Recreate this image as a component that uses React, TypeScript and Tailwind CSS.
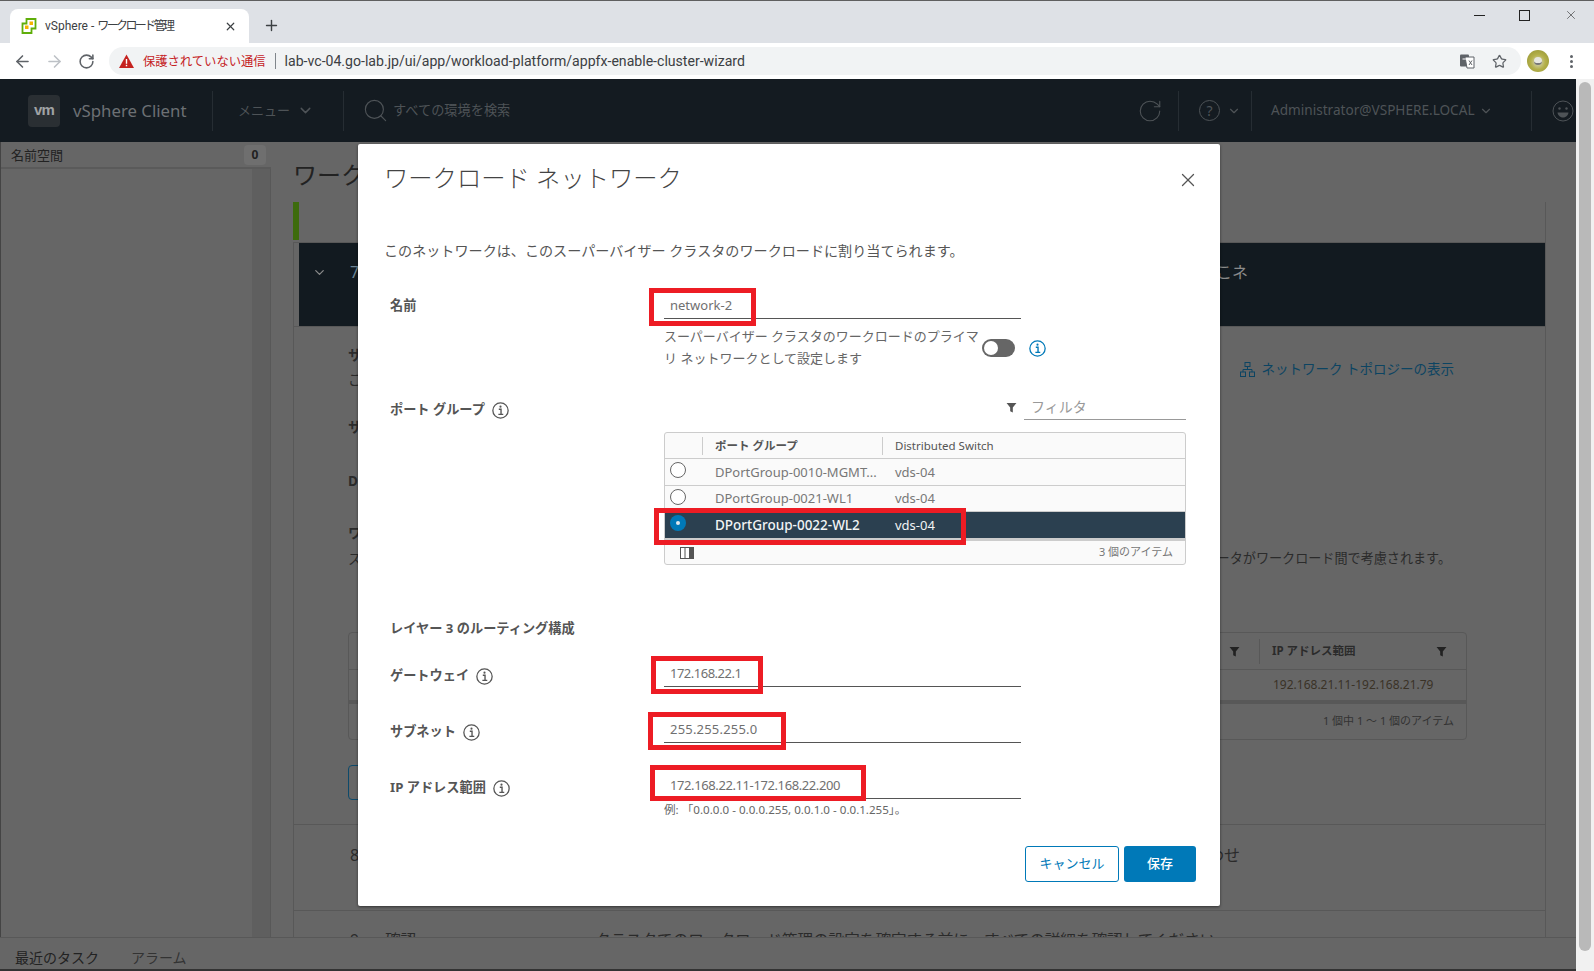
import { ArrowLeft, ArrowRight, ChevronDown, RotateCw, Search, Star, X, Plus } from "lucide-react";

const sans = "font-['Noto_Sans','Noto_Sans_CJK_JP',sans-serif]";

// small round "i" icon used next to the form labels
const InfoIcon = ({ className = "text-[#555]" }: { className?: string }) => (
  <svg width="17" height="17" viewBox="0 0 16 16" className={className} fill="none">
    <circle cx="8" cy="8" r="7.2" stroke="currentColor" strokeWidth="1.2" />
    <circle cx="8" cy="4.4" r="1" fill="currentColor" />
    <path d="M6.4 6.8H8.5V11.4M6 11.6H10.6" stroke="currentColor" strokeWidth="1.3" />
  </svg>
);

const Funnel = ({ className = "" }: { className?: string }) => (
  <svg width="11" height="11" viewBox="0 0 10 10" className={className}>
    <path d="M0.5 1H9.5L6.2 5V9.5L3.8 8.4V5Z" fill="currentColor" />
  </svg>
);

const VsphereFavicon = () => (
  <svg width="16" height="16" viewBox="0 0 16 16" fill="none">
    <path d="M5.5 1H14.5V10.5H10.5V15H1.5V5.5H5.5Z" stroke="#5fae0a" strokeWidth="1.8" />
    <rect x="4" y="7.5" width="3.5" height="3.5" fill="#f4b400" />
    <rect x="8.5" y="3.5" width="3.5" height="3.5" fill="#f4b400" />
  </svg>
);

const TabStrip = () => (
  <div className="h-[43px] bg-[#dee1e6] border-t border-[#5f5f5f] flex items-end pl-[10px] shrink-0">
    <div className="w-[239px] h-[34px] bg-white rounded-t-lg flex items-center pl-[11px] pr-[12px]">
      <VsphereFavicon />
      <span className="ml-[8px] flex-1 text-[12px] text-[#3c4043] font-['Roboto','Noto_Sans_CJK_JP',sans-serif] whitespace-nowrap">
        vSphere - <span className="tracking-[-2.6px]">ワークロード管理</span>
      </span>
      <X size={13} strokeWidth={2.2} className="text-[#3c4043]" />
    </div>
    <Plus size={17} strokeWidth={2} className="text-[#3c4043] ml-[14px] mb-[9px]" />
    <div className="flex-1 flex justify-end items-center self-start gap-[34px] pt-[7px] pr-[17px]">
      <div className="w-[11px] h-px bg-[#222]" />
      <div className="w-[11px] h-[11px] border border-[#222]" />
      <X size={14} strokeWidth={1} className="text-[#222] -mr-[1px]" />
    </div>
  </div>
);

const Toolbar = () => (
  <div className="h-[36px] bg-white flex items-center shrink-0 pl-[13px]">
    <ArrowLeft size={19} strokeWidth={2} className="text-[#5f6368]" />
    <ArrowRight size={19} strokeWidth={2} className="text-[#bdc1c6] ml-[13px]" />
    <RotateCw size={17} strokeWidth={2.2} className="text-[#5f6368] ml-[14px]" />
    <div className="ml-[14px] w-[1412px] h-[28px] rounded-full bg-[#f1f3f4] flex items-center pl-[10px] pr-[14px]">
      <svg width="15" height="14" viewBox="0 0 15 14">
        <path d="M7.5 0.5L15 14H0Z" fill="#c5221f" />
        <rect x="6.8" y="5" width="1.4" height="4.8" fill="#fff" />
        <rect x="6.8" y="10.8" width="1.4" height="1.5" fill="#fff" />
      </svg>
      <span className="ml-[9px] text-[12.3px] text-[#c5221f] font-['Noto_Sans_CJK_JP',sans-serif] whitespace-nowrap">
        保護されていない通信
      </span>
      <div className="ml-[9px] w-px h-[16px] bg-[#80868b]" />
      <span className="ml-[9px] flex-1 pt-px text-[14.1px] text-[#3c4043] font-['Roboto',sans-serif] whitespace-nowrap">
        lab-vc-04.go-lab.jp/ui/app/workload-platform/appfx-enable-cluster-wizard
      </span>
      <svg width="15" height="15" viewBox="0 0 15 15">
        <rect x="0" y="0.5" width="9" height="12" rx="1" fill="#5f6368" />
        <path d="M5 3H14V14H7Z" fill="#fff" stroke="#5f6368" />
        <path d="M2.5 5H6.5M9 6.5L12 11M12 6.5L9 11" stroke="#fff" strokeWidth="1" />
        <path d="M9 6.5L12 11M12 6.5L9 11" stroke="#5f6368" strokeWidth="1" />
      </svg>
      <Star size={15} strokeWidth={2} className="text-[#5f6368] ml-[17px]" />
    </div>
    <div className="ml-[6px] w-[22px] h-[22px] rounded-full bg-[radial-gradient(circle_at_50%_55%,#d8d8c8_0%,#b4b04a_45%,#8f8f30_100%)] flex items-center justify-center">
      <div className="w-[8px] h-[8px] rounded-full bg-[#e6e6e0] border-b-2 border-[#777]" />
    </div>
    <div className="ml-[21px] flex flex-col gap-[2px]">
      <div className="w-[3px] h-[3px] rounded-full bg-[#5f6368]" />
      <div className="w-[3px] h-[3px] rounded-full bg-[#5f6368]" />
      <div className="w-[3px] h-[3px] rounded-full bg-[#5f6368]" />
    </div>
  </div>
);

const HeaderDivider = () => <div className="w-px h-[40px] bg-[#262d33]" />;

const AppHeader = () => (
  <div className={`h-[63px] bg-[#141b21] flex items-center shrink-0 text-[#4e5357] ${sans}`}>
    <div className="ml-[28px] w-[32px] h-[32px] bg-[#2a2f33] rounded-sm flex items-center justify-center text-[#a0a3a5] text-[15px] font-bold tracking-tighter font-['Liberation_Sans',sans-serif]">
      vm
    </div>
    <span className="ml-[13px] w-[139px] text-[16.8px] text-[#6c7074] whitespace-nowrap">vSphere Client</span>
    <HeaderDivider />
    <span className="ml-[25px] text-[13px] whitespace-nowrap">メニュー</span>
    <ChevronDown size={17} className="ml-[7px]" />
    <div className="ml-[29px]"><HeaderDivider /></div>
    <Search size={27} strokeWidth={1} className="ml-[18px]" />
    <span className="ml-[4px] text-[13.2px] whitespace-nowrap">すべての環境を検索</span>
    <div className="flex-1" />
    <RotateCw size={26} strokeWidth={1} />
    <div className="ml-[15px]"><HeaderDivider /></div>
    <div className="ml-[20px] w-[21px] h-[21px] rounded-full border border-current flex items-center justify-center text-[14px]">?</div>
    <ChevronDown size={14} className="ml-[7px]" />
    <div className="ml-[10px]"><HeaderDivider /></div>
    <span className="ml-[19px] w-[204px] text-[13.6px] whitespace-nowrap">Administrator@VSPHERE.LOCAL</span>
    <ChevronDown size={14} className="ml-[4px]" />
    <div className="ml-[38px]"><HeaderDivider /></div>
    <svg width="22" height="22" viewBox="0 0 22 22" fill="none" className="ml-[20px] mr-[2px]">
      <circle cx="11" cy="11" r="10" stroke="currentColor" />
      <circle cx="7.5" cy="8.5" r="1.2" fill="currentColor" />
      <circle cx="14.5" cy="8.5" r="1.2" fill="currentColor" />
      <path d="M5.5 12.5H16.5C16 16 13.5 17.5 11 17.5C8.5 17.5 6 16 5.5 12.5Z" fill="currentColor" />
    </svg>
  </div>
);

const Sidebar = () => (
  <div className="w-[271px] shrink-0 flex flex-col border-l border-[#444]">
    <div className="h-[27px] shrink-0 border-b-2 border-[#5a5a5a] flex items-center justify-between pl-[10px] pr-[5px] text-[13px] text-[#222]">
      <span className="pt-[2px]">名前空間</span>
      <span className="w-[22px] h-[20px] bg-[#6f6f6f] rounded-sm flex items-center justify-center text-[12px] font-bold">0</span>
    </div>
    <div className="flex-1 flex justify-end">
      <div className="w-[19px] bg-[#5f5f5f] border-r border-[#585858]" />
    </div>
  </div>
);

// everything behind the modal, dimmed colours taken straight off the screenshot
const BackgroundPanel = () => (
  <div className="flex-1 min-w-0 pl-[22px] pr-[30px] overflow-hidden h-[795px] text-[#2b2b2b]">
    <div className="h-[60px] flex items-center text-[24px] text-[#222] pt-[6px] whitespace-nowrap">ワーク</div>
    <div className="h-[40px] border-r border-[#585858]">
      <div className="w-[6px] h-[38px] bg-[#3d6b0d]" />
    </div>
    <div className="h-[85px] border-l border-[#585858] pl-[5px] border-y border-y-[#585858]">
      <div className="h-full bg-[#121a20] border-r border-[#585858] flex items-start justify-between pt-[17px] pl-[13px] pr-[297px] text-[#8a8a8a] text-[16px]">
        <div className="flex items-center gap-[23px]">
          <ChevronDown size={15} />
          <span className="text-[#6c8494]">7</span>
        </div>
        <span>こネ</span>
      </div>
    </div>
    <div className="border-x border-[#585858] pl-[54px] pr-[78px] text-[13.5px]">
      <div className="flex justify-between">
        <div className="pt-[16px]">
          <div className="h-[24px] flex items-center font-bold">サービス</div>
          <div className="h-[24px] flex items-center mt-px">この</div>
        </div>
        <div className="flex items-center gap-[6px] text-[#0c4462] text-[13.5px] pt-[20px] mr-[13px]">
          <svg width="15" height="15" viewBox="0 0 15 15" fill="none" stroke="currentColor">
            <rect x="5" y="0.5" width="5" height="4" />
            <rect x="0.5" y="10" width="5" height="4.5" />
            <rect x="9.5" y="10" width="5" height="4.5" />
            <path d="M7.5 4.5V7.5M3 10V7.5H12V10" />
          </svg>
          <span className="whitespace-nowrap">ネットワーク トポロジーの表示</span>
        </div>
      </div>
      <div className="h-[24px] flex items-center mt-[23px] font-bold">サブネット</div>
      <div className="h-[24px] flex items-center mt-[30px] font-bold">DNS</div>
      <div className="h-[24px] flex items-center mt-[28px] font-bold">ワークロード</div>
      <div className="h-[24px] flex items-center mt-[2px] justify-between">
        <span>ストレージ</span>
        <span className="mr-[16px] text-[13.1px] whitespace-nowrap">ータがワークロード間で考慮されます。</span>
      </div>
      <div className="mt-[61px] h-[108px] border border-[#585858] rounded-sm flex flex-col">
        <div className="h-[37px] border-b border-[#585858] flex items-center justify-end text-[11.5px] font-bold pr-[19px]">
          <Funnel className="text-[#222] mr-[19px]" />
          <div className="w-px h-[25px] bg-[#585858] mr-[12px]" />
          <span className="w-[164px] whitespace-nowrap">IP アドレス範囲</span>
          <Funnel className="text-[#222]" />
        </div>
        <div className="h-[33px] border-b-[3px] border-[#585858] flex items-center justify-end pr-[21px] text-[12px] text-[#3a3226]">
          <span className="w-[172px] whitespace-nowrap">192.168.21.11-192.168.21.79</span>
        </div>
        <div className="flex-1 border-t border-[#585858] flex items-center justify-end pr-[12px] text-[11px] text-[#333]">
          1 個中 1 ～ 1 個のアイテム
        </div>
      </div>
      <div className="mt-[25px] w-[100px] h-[35px] border border-[#0d4a6b] rounded-sm" />
    </div>
    <div className="h-[24px] border-x border-[#585858]" />
    <div className="h-[86px] border border-[#585858] border-b-0 pl-[56px] pr-[305px] pt-[18px] flex justify-between items-start text-[16px]">
      <span>8</span>
      <span>合わせ</span>
    </div>
    <div className="h-[60px] border border-[#585858] border-b-0 pl-[56px] pt-[18px] flex text-[15.6px] text-[#2b2b2b]">
      <span className="w-[35px]">9</span>
      <span className="w-[210px]">確認</span>
      <span className="whitespace-nowrap">クラスタでのワークロード管理の設定を確定する前に、すべての詳細を確認してください</span>
    </div>
  </div>
);

const BottomTabs = () => (
  <div className="h-[34px] bg-[#666] border-t border-[#585858] border-b-2 border-b-[#333] flex items-center gap-[32px] pl-[15px] pt-[7px] text-[14px] text-[#222] shrink-0">
    <span>最近のタスク</span>
    <span className="text-[#333]">アラーム</span>
  </div>
);

const Scrollbar = () => (
  <div className="w-[18px] shrink-0 bg-[#f1f1f1] pt-[3px] pl-[3px] pr-[3px]">
    <div className="h-[869px] bg-[#b9b9b9] rounded-full" />
  </div>
);

// the red annotation frames drawn over the dialog
const RedBox = ({ className }: { className: string }) => (
  <div className={`absolute border-[5px] border-[#ed1c24] pointer-events-none ${className}`} />
);

const FormInput = ({ value, className = "" }: { value: string; className?: string }) => (
  <div className={`h-[27px] w-[357px] border-b border-[#555] pl-[6px] flex items-center text-[13px] text-[#707070] pt-[2px] ${className}`}>
    {value}
  </div>
);

const FormLabel = ({ text, info, className }: { text: string; info?: boolean; className: string }) => (
  <div className={`w-[274px] shrink-0 flex items-start gap-[7px] text-[13.2px] font-bold text-[#555] leading-[20px] ${className}`}>
    <span>{text}</span>
    {info && <span className="mt-[3px]"><InfoIcon /></span>}
  </div>
);

const Radio = ({ on }: { on?: boolean }) =>
  on ? (
    <div className="w-[16px] h-[16px] rounded-full bg-[#0079b8] flex items-center justify-center">
      <div className="w-[4px] h-[4px] rounded-full bg-[#dfe8ee]" />
    </div>
  ) : (
    <div className="w-[16px] h-[16px] rounded-full border border-[#666] bg-white" />
  );

const rows = [
  { name: "DPortGroup-0010-MGMT...", sw: "vds-04", h: "h-[27px]" },
  { name: "DPortGroup-0021-WL1", sw: "vds-04", h: "h-[26px]" },
];

const PortGroupTable = () => (
  <div className="mt-[12px] h-[133px] w-[522px] border border-[#ccc] rounded-[3px] flex flex-col bg-[#fafafa] overflow-hidden text-[13px]">
    <div className="h-[26px] border-b border-[#ccc] flex items-center text-[#555] text-[11.5px] shrink-0">
      <div className="w-[38px] h-[18px] border-r border-[#ccc]" />
      <div className="w-[180px] h-[18px] border-r border-[#ccc] pl-[12px] flex items-center font-bold">ポート グループ</div>
      <div className="pl-[12px]">Distributed Switch</div>
    </div>
    {rows.map((r) => (
      <div key={r.name} className={`${r.h} border-b border-[#ccc] flex items-center text-[#777] shrink-0`}>
        <div className="w-[38px] pl-[5px] -mt-[4px]"><Radio /></div>
        <div className="w-[180px] pl-[12px] pt-px whitespace-nowrap">{r.name}</div>
        <div className="pl-[12px] pt-px">{r.sw}</div>
      </div>
    ))}
    <div className="h-[26px] bg-[#2b4050] flex items-center text-[#f2f4f5] shrink-0">
      <div className="w-[38px] pl-[5px] -mt-[4px]"><Radio on /></div>
      <div className="w-[180px] pl-[12px] pt-px whitespace-nowrap text-[13.5px] font-medium">DPortGroup-0022-WL2</div>
      <div className="pl-[12px] pt-px">vds-04</div>
    </div>
    <div className="h-[3px] bg-[#ccc] shrink-0" />
    <div className="flex-1 flex items-center justify-between pl-[15px] pr-[12px] text-[11px] text-[#777]">
      <svg width="14" height="12" viewBox="0 0 14 12">
        <rect x="0.5" y="0.5" width="13" height="11" fill="#fff" stroke="#555" />
        <rect x="9" y="0.5" width="4.5" height="11" fill="#555" />
        <path d="M5 0.5V11.5" stroke="#555" />
      </svg>
      <span>3 個のアイテム</span>
    </div>
  </div>
);

const WorkloadNetworkModal = () => (
  <div className={`absolute left-[358px] top-[144px] w-[862px] h-[762px] bg-white shadow-[0_1px_3px_rgba(0,0,0,0.5)] rounded-[2px] ${sans}`}>
    <div className="h-[68px] flex items-center justify-between pl-[26px] pr-[21px]">
      <h3 className="text-[24.3px] font-light text-[#444] whitespace-nowrap">ワークロード ネットワーク</h3>
      <X size={22} strokeWidth={1.4} className="text-[#555] mt-[3px]" />
    </div>
    <p className="mt-[27px] h-[24px] pl-[26px] flex items-center text-[14.1px] text-[#555]">
      このネットワークは、このスーパーバイザー クラスタのワークロードに割り当てられます。
    </p>
    <div className="pl-[32px]">
      <div className="mt-[29px] flex">
        <FormLabel text="名前" className="pt-[3px]" />
        <FormInput value="network-2" />
      </div>
      <div className="mt-[7px] ml-[274px] h-[44px] flex items-center text-[13px] leading-[22px] text-[#666]">
        <div className="w-[318px] whitespace-nowrap -mt-[2px]">
          スーパーバイザー クラスタのワークロードのプライマ
          <br />
          リ ネットワークとして設定します
        </div>
        <div className="w-[33px] h-[18px] rounded-full bg-[#666] p-[2px]">
          <div className="w-[14px] h-[14px] rounded-full bg-white" />
        </div>
        <span className="ml-[14px]"><InfoIcon className="text-[#0079b8]" /></span>
      </div>
      <div className="mt-[24px] flex">
        <FormLabel text="ポート グループ" info className="pt-[5px]" />
        <div>
          <div className="h-[26px] flex items-center justify-end">
            <Funnel className="text-[#555] mr-[7px]" />
            <div className="w-[162px] h-full border-b border-[#999] pl-[7px] flex items-center text-[14px] text-[#999]">フィルタ</div>
          </div>
          <PortGroupTable />
        </div>
      </div>
      <div className="mt-[54px] h-[20px] flex items-center text-[13.2px] font-bold text-[#555]">レイヤー 3 のルーティング構成</div>
      <div className="mt-[21px] flex">
        <FormLabel text="ゲートウェイ" info className="pt-[5px]" />
        <FormInput value="172.168.22.1" className="tracking-[-0.5px]" />
      </div>
      <div className="mt-[29px] flex">
        <FormLabel text="サブネット" info className="pt-[5px]" />
        <FormInput value="255.255.255.0" className="tracking-[0.2px]" />
      </div>
      <div className="mt-[29px] flex">
        <FormLabel text="IP アドレス範囲" info className="pt-[5px]" />
        <FormInput value="172.168.22.11-172.168.22.200" className="tracking-[-0.4px]" />
      </div>
      <div className="mt-[3px] ml-[274px] h-[16px] flex items-center text-[11.6px] text-[#666]">
        例: 「0.0.0.0 - 0.0.0.255, 0.0.1.0 - 0.0.1.255」。
      </div>
    </div>
    <div className="mt-[28px] pr-[24px] flex justify-end gap-[5px] text-[13px]">
      <button className="w-[94px] h-[36px] border border-[#0079b8] rounded-[3px] text-[#0079b8] bg-white">キャンセル</button>
      <button className="w-[72px] h-[36px] rounded-[3px] bg-[#0079b8] text-white font-medium">保存</button>
    </div>

    <RedBox className="left-[291px] top-[144px] w-[107px] h-[38px]" />
    <RedBox className="left-[296px] top-[364px] w-[312px] h-[37px]" />
    <RedBox className="left-[293px] top-[512px] w-[112px] h-[38px]" />
    <RedBox className="left-[290px] top-[568px] w-[138px] h-[38px]" />
    <RedBox className="left-[292px] top-[621px] w-[216px] h-[36px]" />
  </div>
);

export default function App() {
  return (
    <div className={`relative w-[1594px] h-[971px] overflow-hidden flex flex-col ${sans}`}>
      <TabStrip />
      <Toolbar />
      <div className="flex-1 flex min-h-0">
        <div className="flex-1 min-w-0 flex flex-col bg-[#666]">
          <AppHeader />
          <div className="flex-1 flex min-h-0">
            <Sidebar />
            <BackgroundPanel />
          </div>
          <BottomTabs />
        </div>
        <Scrollbar />
      </div>
      <WorkloadNetworkModal />
    </div>
  );
}
